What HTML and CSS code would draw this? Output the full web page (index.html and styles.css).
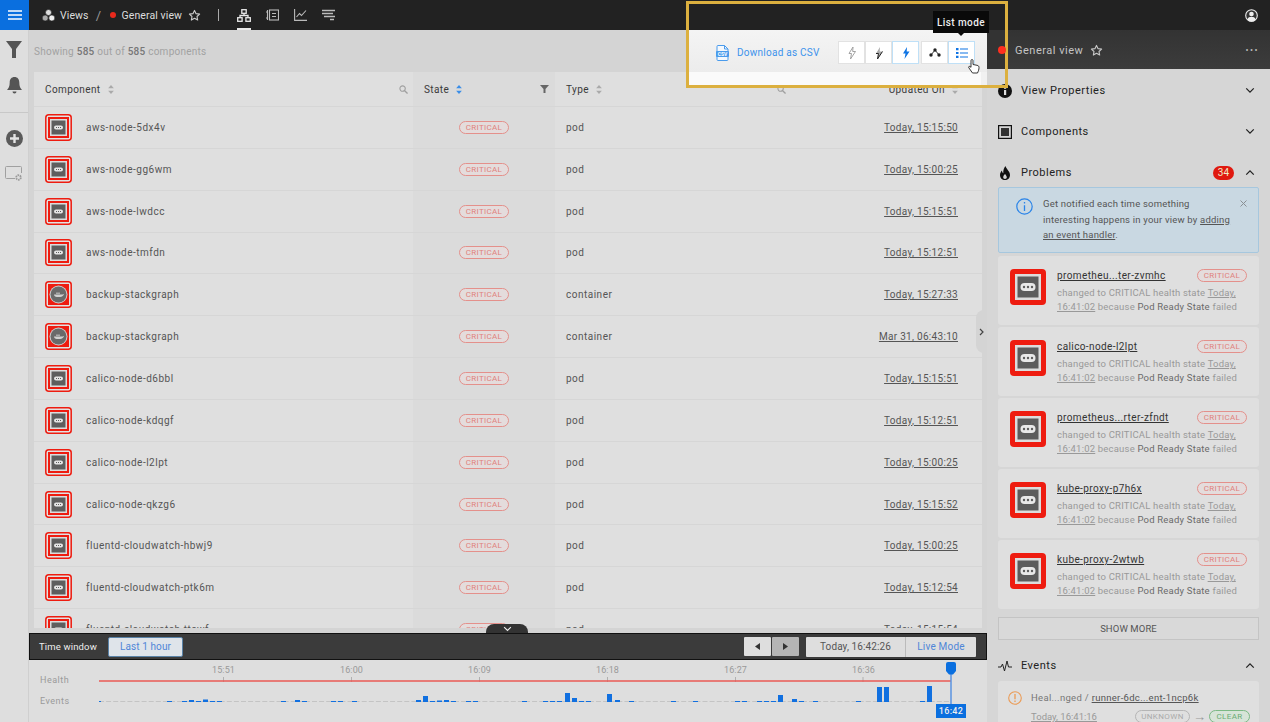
FILE: index.html
```html
<!DOCTYPE html>
<html lang="en">
<head>
<meta charset="utf-8">
<title>General view</title>
<link rel="stylesheet" href="styles.css">
</head>
<body>
<svg class="defs" width="0" height="0" aria-hidden="true">
  <defs>
    <symbol id="pod" viewBox="0 0 27 27">
      <rect x=".8" y=".8" width="25.4" height="25.4" rx="3" fill="#e2e2e2" stroke="#ee1c10" stroke-width="1.5"/>
      <rect x="3" y="3" width="21" height="21" fill="#ee1c10"/>
      <rect x="5" y="5" width="17" height="17" fill="#dcdcdc"/>
      <rect x="6.5" y="6.5" width="14" height="14" fill="#5e5e5e"/>
      <rect x="9" y="11.5" width="9" height="4" rx="2" fill="#e6e6e6"/>
      <path d="M11 13.5h1M13 13.5h1M15 13.5h1" stroke="#5e5e5e"/>
    </symbol>
    <symbol id="docker" viewBox="0 0 27 27">
      <rect x=".8" y=".8" width="25.4" height="25.4" rx="3" fill="#e2e2e2" stroke="#ee1c10" stroke-width="1.5"/>
      <rect x="3" y="3" width="21" height="21" fill="#ee1c10"/>
      <circle cx="13.5" cy="13.5" r="9" fill="#cfcfcf"/>
      <circle cx="13.5" cy="13.5" r="8" fill="#6a6a6a"/>
      <path d="M9 13.5h8.500c.7 0 1.200-.2 1.600-.7-.3 2-2 3.200-4 3.200h-3.200C10.200 16 9 15 9 13.500z" fill="#d0d0d0"/>
      <path d="M11 11.500h4v1.500h-4z" fill="#a8a8a8"/>
    </symbol>
    <symbol id="card-pod" viewBox="0 0 36 36">
      <rect width="36" height="36" rx="4" fill="#ee1c10"/>
      <rect x="5" y="5" width="26" height="26" fill="#dcdcdc"/>
      <rect x="7.500" y="7.500" width="21" height="21" fill="#5c5c5c"/>
      <rect x="10.500" y="14" width="15" height="8" rx="4" fill="#e8e8e8"/>
      <circle cx="14" cy="18" r="1.200" fill="#5c5c5c"/>
      <circle cx="18" cy="18" r="1.200" fill="#5c5c5c"/>
      <circle cx="22" cy="18" r="1.200" fill="#5c5c5c"/>
    </symbol>
    <symbol id="sort" viewBox="0 0 7 11">
      <path d="M3.500 0 7 4H0zM3.500 11 0 7h7z" fill="currentColor"/>
    </symbol>
    <symbol id="search" viewBox="0 0 10 10">
      <circle cx="4" cy="4" r="3" fill="none" stroke="currentColor" stroke-width="1.200"/>
      <path d="M6.300 6.300 9.500 9.500" stroke="currentColor" stroke-width="1.500"/>
    </symbol>
    <symbol id="chev-down" viewBox="0 0 12 8">
      <path d="M1.500 1.500 6 6l4.500-4.500" fill="none" stroke="currentColor" stroke-width="1.500"/>
    </symbol>
    <symbol id="chev-up" viewBox="0 0 12 8">
      <path d="M1.500 6.500 6 2l4.500 4.500" fill="none" stroke="currentColor" stroke-width="1.500"/>
    </symbol>
    <symbol id="star" viewBox="0 0 14 14">
      <path d="m7 1.500 1.700 3.500 3.800.5-2.800 2.600.7 3.800L7 10l-3.400 1.900.7-3.800L1.500 5.500 5.300 5z" fill="none" stroke="currentColor" stroke-width="1.200" stroke-linejoin="round"/>
    </symbol>
  </defs>
</svg>

<div class="app">
  <header class="topbar">
    <button class="menu-btn" aria-label="Menu">
      <svg width="14" height="10" viewBox="0 0 14 10"><path d="M0 1h14M0 5h14M0 9h14" stroke="#fff" stroke-width="1.600"/></svg>
    </button>
    <nav class="crumbs">
      <svg class="views-ico" width="13" height="13" viewBox="0 0 13 13"><circle cx="6.500" cy="3.500" r="3" fill="#ddd" stroke="#222" stroke-width=".6"/><circle cx="3.200" cy="9" r="3" fill="#aaa" stroke="#222" stroke-width=".6"/><circle cx="9.800" cy="9" r="3" fill="#eee" stroke="#222" stroke-width=".6"/></svg>
      <span class="crumb">Views</span>
      <span class="crumb-sep">/</span>
      <span class="dot"></span>
      <span class="crumb">General view</span>
      <svg class="crumb-star" width="13" height="13"><use href="#star"/></svg>
      <span class="vbar"></span>
      <span class="tab tab-on">
        <svg width="14" height="13" viewBox="0 0 14 13"><g fill="none" stroke="#e8e8e8" stroke-width="1.300"><rect x="4.800" y=".7" width="4.400" height="3.600"/><rect x=".7" y="8.700" width="4.400" height="3.600"/><rect x="8.900" y="8.700" width="4.400" height="3.600"/><path d="M7 4.500v2M3 8.500v-2h8v2"/></g></svg>
      </span>
      <span class="tab">
        <svg width="13" height="12" viewBox="0 0 13 12"><g fill="none" stroke="#bbb" stroke-width="1.100"><path d="M0 3h2M0 9h2M1.500 1v10"/><rect x="3.500" y="1" width="9" height="10"/><path d="M6 4.500h4M6 7.500h4"/></g></svg>
      </span>
      <span class="tab">
        <svg width="13" height="12" viewBox="0 0 13 12"><path d="M.6 0v11.400H13M2.500 8l3-3.500 2 2L12 1.500" fill="none" stroke="#bbb" stroke-width="1.100"/></svg>
      </span>
      <span class="tab">
        <svg width="13" height="12" viewBox="0 0 13 12"><path d="M0 1.500h13M0 4.500h11M2 7.500h11M8 10.500h4" fill="none" stroke="#bbb" stroke-width="1.500"/></svg>
      </span>
    </nav>
    <svg class="user" width="13" height="13" viewBox="0 0 13 13"><circle cx="6.500" cy="6.500" r="5.800" fill="#333" stroke="#eee" stroke-width="1.100"/><circle cx="6.500" cy="5" r="2.300" fill="#eee"/><path d="M2.300 10.800c.6-2.400 2.300-3 4.200-3s3.600.6 4.200 3a5.500 5.500 0 0 1-8.400 0z" fill="#eee"/></svg>
  </header>

  <div class="main">
    <aside class="rail">
      <div class="rail-top">
        <svg width="16" height="17" viewBox="0 0 16 17"><path d="M0 0h16L10 8v9H6V8z" fill="#555"/></svg>
        <svg width="15" height="17" viewBox="0 0 15 17"><path d="M7.500 0c3 0 4.800 2.200 4.800 5.500 0 4 1 5.500 2.700 7.500H0c1.700-2 2.700-3.500 2.700-7.500C2.700 2.200 4.500 0 7.500 0zM5.500 14.500h4a2 2 0 0 1-4 0z" fill="#555"/></svg>
      </div>
      <div class="rail-bottom">
        <svg width="17" height="17" viewBox="0 0 17 17"><circle cx="8.500" cy="8.500" r="8.500" fill="#5a5a5a"/><path d="M8.500 4v9M4 8.500h9" stroke="#e4e4e4" stroke-width="2.400"/></svg>
        <svg width="18" height="15" viewBox="0 0 18 15"><path d="M10 12.500H1.500a1 1 0 0 1-1-1v-10a1 1 0 0 1 1-1h14a1 1 0 0 1 1 1V7" fill="none" stroke="#a0a0a0"/><circle cx="13.500" cy="11.500" r="2.300" fill="none" stroke="#9a9a9a" stroke-width="1.800" stroke-dasharray="1.500 .7"/></svg>
      </div>
    </aside>

    <section class="center">
      <div class="tools">
        <p class="showing">Showing <b>585</b> out of <b>585</b> components</p>
      </div>
      <div class="table">
        <div class="row head">
          <div class="col col-name"><span>Component</span><svg class="sort"><use href="#sort"/></svg><svg class="find"><use href="#search"/></svg></div>
          <div class="col col-state"><span>State</span><svg class="sort sort-on"><use href="#sort"/></svg><svg class="funnel" viewBox="0 0 9 8"><path d="M0 0h9L5.500 4v4h-2V4z" fill="currentColor"/></svg></div>
          <div class="col col-type"><span>Type</span><svg class="sort"><use href="#sort"/></svg><svg class="find find-type"><use href="#search"/></svg></div>
          <div class="col col-time"><span>Updated On</span><svg class="sort"><use href="#sort"/></svg></div>
        </div>
        <div class="row"><div class="col col-name"><svg class="ico"><use href="#pod"/></svg><span>aws-node-5dx4v</span></div><div class="col col-state"><span class="badge">CRITICAL</span></div><div class="col col-type">pod</div><div class="col col-time"><u>Today, 15:15:50</u></div></div>
        <div class="row"><div class="col col-name"><svg class="ico"><use href="#pod"/></svg><span>aws-node-gg6wm</span></div><div class="col col-state"><span class="badge">CRITICAL</span></div><div class="col col-type">pod</div><div class="col col-time"><u>Today, 15:00:25</u></div></div>
        <div class="row"><div class="col col-name"><svg class="ico"><use href="#pod"/></svg><span>aws-node-lwdcc</span></div><div class="col col-state"><span class="badge">CRITICAL</span></div><div class="col col-type">pod</div><div class="col col-time"><u>Today, 15:15:51</u></div></div>
        <div class="row"><div class="col col-name"><svg class="ico"><use href="#pod"/></svg><span>aws-node-tmfdn</span></div><div class="col col-state"><span class="badge">CRITICAL</span></div><div class="col col-type">pod</div><div class="col col-time"><u>Today, 15:12:51</u></div></div>
        <div class="row"><div class="col col-name"><svg class="ico"><use href="#docker"/></svg><span>backup-stackgraph</span></div><div class="col col-state"><span class="badge">CRITICAL</span></div><div class="col col-type">container</div><div class="col col-time"><u>Today, 15:27:33</u></div></div>
        <div class="row"><div class="col col-name"><svg class="ico"><use href="#docker"/></svg><span>backup-stackgraph</span></div><div class="col col-state"><span class="badge">CRITICAL</span></div><div class="col col-type">container</div><div class="col col-time"><u>Mar 31, 06:43:10</u></div></div>
        <div class="row"><div class="col col-name"><svg class="ico"><use href="#pod"/></svg><span>calico-node-d6bbl</span></div><div class="col col-state"><span class="badge">CRITICAL</span></div><div class="col col-type">pod</div><div class="col col-time"><u>Today, 15:15:51</u></div></div>
        <div class="row"><div class="col col-name"><svg class="ico"><use href="#pod"/></svg><span>calico-node-kdqgf</span></div><div class="col col-state"><span class="badge">CRITICAL</span></div><div class="col col-type">pod</div><div class="col col-time"><u>Today, 15:12:51</u></div></div>
        <div class="row"><div class="col col-name"><svg class="ico"><use href="#pod"/></svg><span>calico-node-l2lpt</span></div><div class="col col-state"><span class="badge">CRITICAL</span></div><div class="col col-type">pod</div><div class="col col-time"><u>Today, 15:00:25</u></div></div>
        <div class="row"><div class="col col-name"><svg class="ico"><use href="#pod"/></svg><span>calico-node-qkzg6</span></div><div class="col col-state"><span class="badge">CRITICAL</span></div><div class="col col-type">pod</div><div class="col col-time"><u>Today, 15:15:52</u></div></div>
        <div class="row"><div class="col col-name"><svg class="ico"><use href="#pod"/></svg><span>fluentd-cloudwatch-hbwj9</span></div><div class="col col-state"><span class="badge">CRITICAL</span></div><div class="col col-type">pod</div><div class="col col-time"><u>Today, 15:00:25</u></div></div>
        <div class="row"><div class="col col-name"><svg class="ico"><use href="#pod"/></svg><span>fluentd-cloudwatch-ptk6m</span></div><div class="col col-state"><span class="badge">CRITICAL</span></div><div class="col col-type">pod</div><div class="col col-time"><u>Today, 15:12:54</u></div></div>
        <div class="row"><div class="col col-name"><svg class="ico"><use href="#pod"/></svg><span>fluentd-cloudwatch-ttcwf</span></div><div class="col col-state"><span class="badge">CRITICAL</span></div><div class="col col-type">pod</div><div class="col col-time"><u>Today, 15:15:54</u></div></div>
      </div>

      <div class="timebar">
        <span class="tw-label">Time window</span>
        <button class="tw-range">Last 1 hour</button>
        <div class="tw-right">
          <div class="stepper">
            <button class="step"><svg width="5" height="7" viewBox="0 0 5 7"><path d="M5 0v7L0 3.500z" fill="#333"/></svg></button>
            <button class="step step-off"><svg width="5" height="7" viewBox="0 0 5 7"><path d="M0 0v7l5-3.500z" fill="#333"/></svg></button>
          </div>
          <div class="live">
            <span class="live-time">Today, 16:42:26</span>
            <button class="live-btn">Live Mode</button>
          </div>
        </div>
      </div>

      <div class="timeline">
        <div class="tl-labels"><span>Health</span><span>Events</span></div>
        <div class="tl-chart">
          <svg class="tl-svg" width="882" height="62" viewBox="99 660 882 62">
            <path d="M223.500 677v5M351.500 677v5M479.500 677v5M607.500 677v5M735.500 677v5M863 677v5" stroke="#b0b0b0"/>
            <path d="M99 681h852" stroke="#ea5a55" stroke-width="1.400"/>
            <path d="M99 701.500h852" stroke="#c4c4c4" stroke-dasharray="5 2.100"/>
            <path fill="#1170e0" d="M99 701h2v1h-2zM167 701h5v1h-5zM182 701h5v1h-5zM189 700h5v2h-5zM196 701h5v1h-5zM203 699.500h5v2.500h-5zM210 701h5v1h-5zM217 701h5v1h-5zM281 701h5v1h-5zM295 700h5v2h-5zM302 701h5v1h-5zM331 701h5v1h-5zM338 701h5v1h-5zM352 701h5v1h-5zM416 700h5v2h-5zM423 696h5v6h-5zM430 701h5v1h-5zM437 700.500h5v1.500h-5zM444 700h5v2h-5zM451 701h5v1h-5zM466 701h5v1h-5zM473 701h5v1h-5zM522 701h5v1h-5zM543 701h5v1h-5zM550 701h5v1h-5zM557 701h5v1h-5zM565 693h5v9h-5zM572 698h5v4h-5zM579 701h5v1h-5zM586 701h5v1h-5zM607 694h5v8h-5zM615 700h5v2h-5zM629 701h5v1h-5zM671 701h5v1h-5zM693 701h5v1h-5zM735 701h5v1h-5zM742 701h5v1h-5zM757 701h5v1h-5zM764 701h5v1h-5zM771 701h5v1h-5zM778 695h5v7h-5zM792 699h5v3h-5zM799 701h5v1h-5zM813 701h5v1h-5zM856 701h5v1h-5zM877 687h5v15h-5zM884 687h5v15h-5zM920 701h5v1h-5zM927 686h5v16h-5z"/>
            <path d="M951 674v30" stroke="#5a93e0" stroke-width="1.500"/>
            <path d="M946 664a2 2 0 0 1 2-2h6a2 2 0 0 1 2 2v7l-3 3.500h-4l-3-3.500z" fill="#0a6fdf"/>
          </svg>
          <span class="tick t1">15:51</span>
          <span class="tick t2">16:00</span>
          <span class="tick t3">16:09</span>
          <span class="tick t4">16:18</span>
          <span class="tick t5">16:27</span>
          <span class="tick t6">16:36</span>
          <span class="now">16:42</span>
        </div>
      </div>

      <div class="pull"><svg width="9" height="6"><use href="#chev-down"/></svg></div>
      <div class="collapse"><svg width="5" height="8" viewBox="0 0 5 8"><path d="m1 1 3 3-3 3" fill="none" stroke="#444" stroke-width="1.200"/></svg></div>
    </section>

    <aside class="panel">
      <div class="panel-head">
        <span class="panel-dot"></span>
        <span class="panel-title">General view</span>
        <svg class="panel-star" width="13" height="13"><use href="#star"/></svg>
        <span class="more">&#8226;&#8226;&#8226;</span>
      </div>
      <div class="panel-body">
        <div class="sec">
          <svg class="sec-ico" width="14" height="14" viewBox="0 0 14 14"><circle cx="7" cy="7" r="7" fill="#111"/><path d="M6 3h2.200v1.800H6zM6 6h2.200v5H6z" fill="#ddd"/></svg>
          <span>View Properties</span>
          <svg class="chev"><use href="#chev-down"/></svg>
        </div>
        <div class="sec">
          <svg class="sec-ico" width="14" height="14" viewBox="0 0 14 14"><rect x=".6" y=".6" width="12.800" height="12.800" fill="none" stroke="#111" stroke-width="1.200"/><rect x="3" y="3" width="8" height="8" fill="#333"/></svg>
          <span>Components</span>
          <svg class="chev"><use href="#chev-down"/></svg>
        </div>
        <div class="sec">
          <svg class="sec-ico" width="14" height="14" viewBox="0 0 10 14"><path d="M5.500 0c.5 3 4.500 5 4.500 9 0 3-2.200 5-5 5s-5-2-5-5c0-2 1-3.500 2-4.500 0 1.500.5 2.300 1.300 2.800C3 4.500 4 2 5.500 0zM5 8c-1 1.200-1.800 2-1.800 3.300S4 13 5 13s1.800-.5 1.800-1.700S6 9.200 5 8z" fill="#111"/></svg>
          <span>Problems</span>
          <span class="count">34</span>
          <svg class="chev"><use href="#chev-up"/></svg>
        </div>

        <div class="notice">
          <svg class="notice-ico" width="17" height="17" viewBox="0 0 17 17"><circle cx="8.500" cy="8.500" r="7.700" fill="none" stroke="#2a84e8" stroke-width="1.200"/><path d="M8.500 4v1.600M8.500 7.200V13" stroke="#2a84e8" stroke-width="1.300"/></svg>
          <p>Get notified each time something interesting happens in your view by <u>adding an event handler</u>.</p>
          <svg class="notice-x" width="7" height="7" viewBox="0 0 7 7"><path d="m.5.500 6 6m0-6-6 6" stroke="#8a8f93"/></svg>
        </div>

        <article class="card">
          <svg class="card-ico"><use href="#card-pod"/></svg>
          <div class="card-main">
            <div class="card-top"><u class="card-name">prometheu...ter-zvmhc</u><span class="badge">CRITICAL</span></div>
            <p class="card-text">changed to CRITICAL health state <u>Today, 16:41:02</u> because <em>Pod Ready State</em> failed</p>
          </div>
        </article>
        <article class="card">
          <svg class="card-ico"><use href="#card-pod"/></svg>
          <div class="card-main">
            <div class="card-top"><u class="card-name">calico-node-l2lpt</u><span class="badge">CRITICAL</span></div>
            <p class="card-text">changed to CRITICAL health state <u>Today, 16:41:02</u> because <em>Pod Ready State</em> failed</p>
          </div>
        </article>
        <article class="card">
          <svg class="card-ico"><use href="#card-pod"/></svg>
          <div class="card-main">
            <div class="card-top"><u class="card-name">prometheus...rter-zfndt</u><span class="badge">CRITICAL</span></div>
            <p class="card-text">changed to CRITICAL health state <u>Today, 16:41:02</u> because <em>Pod Ready State</em> failed</p>
          </div>
        </article>
        <article class="card">
          <svg class="card-ico"><use href="#card-pod"/></svg>
          <div class="card-main">
            <div class="card-top"><u class="card-name">kube-proxy-p7h6x</u><span class="badge">CRITICAL</span></div>
            <p class="card-text">changed to CRITICAL health state <u>Today, 16:41:02</u> because <em>Pod Ready State</em> failed</p>
          </div>
        </article>
        <article class="card">
          <svg class="card-ico"><use href="#card-pod"/></svg>
          <div class="card-main">
            <div class="card-top"><u class="card-name">kube-proxy-2wtwb</u><span class="badge">CRITICAL</span></div>
            <p class="card-text">changed to CRITICAL health state <u>Today, 16:41:02</u> because <em>Pod Ready State</em> failed</p>
          </div>
        </article>

        <button class="show-more">SHOW MORE</button>

        <div class="sec sec-events">
          <svg class="sec-ico" width="14" height="12" viewBox="0 0 14 12"><path d="M0 7h3l1.500-3 2 7L9 1l1.500 6H14" fill="none" stroke="#222" stroke-width="1"/></svg>
          <span>Events</span>
          <svg class="chev"><use href="#chev-up"/></svg>
        </div>
        <article class="event">
          <svg class="event-ico" width="14" height="14" viewBox="0 0 14 14"><circle cx="7" cy="7" r="6.300" fill="none" stroke="#eb9b55" stroke-width="1.100"/><path d="M7 3v5.200M7 9.500V11" stroke="#eb9b55" stroke-width="1.300"/></svg>
          <div class="event-main">
            <p class="event-title">Heal...nged / <u>runner-6dc...ent-1ncp6k</u></p>
            <div class="event-foot"><u>Today, 16:41:16</u><span class="pill pill-grey">UNKNOWN</span><span class="arrow">&#8594;</span><span class="pill pill-green">CLEAR</span></div>
          </div>
        </article>
      </div>
    </aside>
  </div>

  <div class="spot">
    <div class="spot-dark"></div>
    <div class="spot-body">
      <div class="spot-left">
        <div class="spot-tools">
          <svg class="csv-ico" width="13" height="16" viewBox="0 0 13 16"><path d="M2 .5h6.500l3.500 3.500v10.500a1 1 0 0 1-1 1H2a1 1 0 0 1-1-1v-13a1 1 0 0 1 1-1z" fill="#f4f8fd" stroke="#4a9bec"/><path d="M8.500.5V4H12" fill="none" stroke="#4a9bec"/><rect x="0" y="6" width="13" height="6" rx="1" fill="#4a9bec"/><text class="csv-text" x="6.500" y="10.800" text-anchor="middle">CSV</text></svg>
          <span class="csv-link">Download as CSV</span>
          <div class="btn-group">
            <button class="tool"><svg width="8" height="12" viewBox="0 0 8 12"><path d="M5 0 1 6.500h2.500L2.500 12 7.500 4.500H4.700z" fill="none" stroke="#999" stroke-width=".9"/></svg></button>
            <button class="tool"><svg width="8" height="12" viewBox="0 0 8 12"><path d="M5 0 1 6.500h2.500L2.500 12 7.500 4.500H4.700z" fill="#aaa"/><path d="M1 6.500h2.500L2.500 12 7.500 4.500" fill="none" stroke="#222" stroke-width="1"/></svg></button>
            <button class="tool tool-on"><svg width="8" height="12" viewBox="0 0 8 12"><path d="M5 0 1 6.500h2.500L2.500 12 7.500 4.500H4.700z" fill="#0f74e4"/></svg></button>
          </div>
          <div class="btn-group">
            <button class="tool"><svg width="12" height="9" viewBox="0 0 12 9"><path d="M6 2 2 7m4-5 4 5" stroke="#333"/><circle cx="6" cy="2" r="1.700" fill="#222"/><circle cx="2" cy="7" r="1.700" fill="#222"/><circle cx="10" cy="7" r="1.700" fill="#222"/></svg></button>
            <button class="tool tool-on"><svg width="12" height="10" viewBox="0 0 12 10"><path d="M0 0h2.500v2.200H0zM0 3.900h2.500v2.200H0zM0 7.800h2.500V10H0zM4 .6h8v1H4zM4 4.500h8v1H4zM4 8.400h8v1H4z" fill="#0f74e4"/></svg></button>
          </div>
        </div>
        <div class="spot-table"></div>
      </div>
      <div class="spot-right"><span class="spot-dot"></span></div>
    </div>
  </div>
  <div class="tooltip">List mode</div>
  <svg class="cursor" width="12" height="15" viewBox="0 0 12 15"><path d="M3 1.500c0-1.300 2-1.300 2 0v4l4 .8c1.500.3 2 1 2 2.200 0 2-.6 3.500-1.500 5.500h-5L1 9c-.8-1-.2-2 1-1.500l1 .8z" fill="#fff" stroke="#222" stroke-width=".9"/></svg>
</div>
</body>
</html>
```

FILE: styles.css
```css
* { box-sizing: border-box; }
html, body { margin: 0; padding: 0; }
body { font-family: Roboto, "Liberation Sans", sans-serif; font-size: 10px; letter-spacing: .5px; color: #444; background: #d4d4d4; }
p { margin: 0; }
button { font: inherit; letter-spacing: inherit; padding: 0; border: 0; background: none; color: inherit; }
.defs { position: absolute; }
.app { position: relative; width: 1270px; height: 722px; overflow: hidden; display: flex; flex-direction: column; }

/* top bar */
.topbar { height: 30px; flex: none; background: #222; display: flex; align-items: center; color: #ddd; }
.menu-btn { width: 29px; height: 30px; background: #0a6fdf; display: flex; align-items: center; justify-content: center; }
.crumbs { display: flex; align-items: center; height: 30px; flex: 1; }
.views-ico { margin-left: 13px; }
.crumb { font-size: 10.500px; letter-spacing: .1px; color: #ddd; margin-left: 5px; white-space: nowrap; }
.crumb-sep { margin: 0 8px 0 7px; color: #999; font-size: 13px; }
.dot { width: 6px; height: 6px; border-radius: 50%; background: #e8291c; margin-right: 1px; }
.crumb-star { color: #ccc; margin-left: 6px; }
.vbar { width: 1px; height: 12px; background: #aaa; margin: 0 18px 0 17px; }
.tab { width: 14px; height: 30px; display: flex; align-items: center; justify-content: center; margin-right: 14px; position: relative; }
.tab-on::after { content: ""; position: absolute; left: 0; right: 0; bottom: 0; height: 2px; background: #e8e8e8; }
.user { margin-right: 12px; }

.main { flex: 1; display: flex; min-height: 0; }

/* left rail */
.rail { width: 29px; flex: none; background: #dedede; border-right: 1px solid #cfcfcf; display: flex; flex-direction: column; align-items: center; }
.rail-top { height: 83px; width: 100%; padding-top: 11px; display: flex; flex-direction: column; align-items: center; gap: 19px; border-bottom: 1px solid #c8c8c8; }
.rail-bottom { padding-top: 17px; display: flex; flex-direction: column; align-items: center; gap: 19px; }

/* centre */
.center { width: 958px; flex: none; display: flex; flex-direction: column; position: relative; background: #d4d4d4; }
.tools { height: 42px; flex: none; padding: 0 5px; display: flex; align-items: center; }
.showing { color: #a2a2a2; font-size: 10px; letter-spacing: .25px; }
.showing b { font-weight: 500; color: #777; }
.table { flex: 1; min-height: 0; margin: 0 5px 5px; overflow: hidden; background: #dfdfdf; }
.row { height: 41.85px; display: flex; border-bottom: 1px solid #d6d6d6; color: #555; }
.row.head { height: 35px; }
.col { display: flex; align-items: center; height: 100%; position: relative; }
.col-name { width: 379px; padding-left: 11px; color: #555; }
.head .col { color: #3a3a3a; letter-spacing: .4px; }
.col-state { width: 142px; background: #dbdbdb; justify-content: center; }
.head .col-state { justify-content: flex-start; padding-left: 11px; }
.col-type { width: 243px; padding-left: 11px; }
.col-time { flex: 1; justify-content: flex-end; padding-right: 24px; color: #555; letter-spacing: .3px; }
.ico { width: 27px; height: 27px; margin-right: 14px; flex: none; }
.sort { width: 6px; height: 9px; margin-left: 7px; color: #aaa; }
.sort-on { color: #3b8ee8; }
.find { position: absolute; right: 5px; width: 9px; height: 9px; color: #a0a0a0; }
.find-type { right: 12px; }
.funnel { position: absolute; right: 6px; width: 9px; height: 8px; color: #666; }
.badge { display: inline-flex; align-items: center; justify-content: center; width: 50px; height: 13px; border: 1px solid #e4908b; border-radius: 7px; font-size: 8px; color: #e0827d; letter-spacing: .3px; flex: none; background: #e4dcdc; }

/* time window bar */
.timebar { height: 27px; flex: none; background: #3b3b3b; border: 1px solid #111; display: flex; align-items: center; padding-left: 9px; }
.tw-label { color: #eee; font-size: 9.500px; letter-spacing: .15px; white-space: nowrap; }
.tw-range { margin-left: 11px; width: 75px; height: 20px; background: #dfe4ea; color: #4f86d8; border-radius: 2px; font-size: 10px; letter-spacing: .1px; border: 1px solid #5a83a8; }
.tw-right { margin-left: auto; display: flex; align-items: center; gap: 6px; padding-right: 10px; }
.stepper { display: flex; gap: 1px; margin-right: 1px; }
.step { width: 27px; height: 19px; background: #dedede; border-radius: 1px; display: flex; align-items: center; justify-content: center; }
.step-off { background: #b5b5b5; }
.live { display: flex; height: 20px; background: #dedede; border-radius: 1px; }
.live-time { width: 100px; display: flex; align-items: center; justify-content: center; color: #555; font-size: 10px; letter-spacing: .1px; white-space: nowrap; border-right: 1px solid #bbb; }
.live-btn { width: 70px; color: #4f86d8; font-size: 10px; letter-spacing: .2px; }

/* timeline */
.timeline { height: 62px; flex: none; background: #dedede; display: flex; position: relative; }
.tl-labels { width: 70px; padding: 15px 0 0 11px; display: flex; flex-direction: column; gap: 10px; color: #9a9a9a; font-size: 9px; line-height: 11px; }
.tl-chart { position: relative; flex: 1; }
.tl-svg { display: block; }
.tick { position: absolute; top: 5px; width: 30px; margin-left: -14.500px; text-align: center; color: #999; font-size: 9px; line-height: 11px; letter-spacing: .1px; }
.t1 { left: 124px; }
.t2 { left: 252px; }
.t3 { left: 380px; }
.t4 { left: 508px; }
.t5 { left: 636px; }
.t6 { left: 764px; }
.now { position: absolute; left: 837px; top: 44px; width: 30px; height: 14px; background: #0a6fdf; color: #eee; font-size: 9px; display: flex; align-items: center; justify-content: center; font-weight: 500; letter-spacing: .3px; }
.pull { position: absolute; left: 457px; top: 594px; width: 42px; height: 9px; background: #333; border-radius: 8px 8px 0 0; display: flex; justify-content: center; align-items: center; color: #eee; }
.collapse { position: absolute; right: 0; top: 280px; width: 11px; height: 43px; background: #d4d4d4; border-radius: 8px 0 0 8px; display: flex; align-items: center; justify-content: center; }

/* right panel */
.panel { flex: 1; min-width: 0; background: #d6d6d6; display: flex; flex-direction: column; }
.panel-head { height: 39px; flex: none; background: linear-gradient(#333, #3c3c3c); display: flex; align-items: center; padding: 1px 11px 0; color: #c4c4c4; }
.panel-dot { width: 8px; height: 8px; border-radius: 50%; background: #e8291c; margin-right: 9px; }
.panel-title { font-size: 11px; white-space: nowrap; }
.panel-star { margin-left: 7px; color: #c8c8c8; }
.more { margin-left: auto; color: #bbb; font-size: 9px; letter-spacing: 1.500px; }
.panel-body { padding: 1px 11px 0; flex: 1; overflow: hidden; }
.sec { height: 41px; display: flex; align-items: center; color: #222; font-size: 11px; }
.sec-ico { margin-right: 9px; flex: none; }
.chev { width: 10px; height: 7px; margin: 0 4px 0 auto; color: #222; flex: none; }
.count { margin-left: auto; width: 21px; height: 14px; background: #e0190f; color: #eec; border-radius: 7px; font-size: 10px; display: flex; align-items: center; justify-content: center; letter-spacing: .2px; }
.count + .chev { margin-left: 11px; }
.notice { height: 66px; margin-top: -6px; background: #c9d8e2; border: 1px solid #a6c7de; border-radius: 2px; padding: 8px 9px 0 17px; display: flex; align-items: flex-start; color: #555; font-size: 9.500px; letter-spacing: .2px; line-height: 15.500px; }
.notice-ico { margin: 2px 10px 0 0; flex: none; }
.notice p { flex: 1; }
.notice-x { flex: none; margin: 4px 2px 0 8px; }
.card { height: 69px; margin-top: 2px; background: #dfdfdf; border-radius: 3px; display: flex; padding: 13px 12px 0 12px; }
.notice + .card { margin-top: 3px; }
.card-ico { width: 36px; height: 36px; flex: none; margin-right: 11px; }
.card-main { flex: 1; min-width: 0; }
.card-top { display: flex; justify-content: space-between; align-items: center; height: 13px; margin-bottom: 4px; }
.card-name { font-size: 10px; letter-spacing: .4px; color: #333; }
.card-text { color: #999; font-size: 9.500px; letter-spacing: .2px; line-height: 13.500px; }
.card-text u { color: #999; }
.card-text em { font-style: normal; color: #6a6a6a; }
.show-more { display: block; width: 100%; height: 23px; margin-top: 8px; border: 1px solid #c4c4c4; background: #d9d9d9; color: #555; font-size: 9.500px; letter-spacing: .1px; }
.sec-events { height: 41px; margin-top: 5px; }
.event { height: 60px; margin-top: -5px; background: #dfdfdf; border-radius: 3px; display: flex; padding: 10px 9px 0 10px; }
.event-ico { flex: none; margin: 0 9px 0 0; }
.event-main { flex: 1; min-width: 0; }
.event-title { color: #777; font-size: 9.500px; letter-spacing: .3px; height: 18px; line-height: 13px; }
.event-title u { color: #555; }
.event-foot { display: flex; align-items: center; color: #999; font-size: 9.500px; letter-spacing: 0; }
.pill { height: 13px; border-radius: 7px; font-size: 8px; display: flex; align-items: center; justify-content: center; border: 1px solid; letter-spacing: .4px; }
.pill-grey { width: 55px; margin-left: auto; color: #aaa; border-color: #b5b5b5; }
.pill-green { width: 41px; color: #6cac74; border-color: #7bb984; background: #d7e4d8; }
.arrow { color: #999; margin: 0 3px; font-size: 13px; }

/* spotlight */
.spot { position: absolute; left: 686px; top: 1px; width: 322px; height: 87px; border: 3px solid #dcb03f; display: flex; flex-direction: column; }
.spot-dark { height: 26px; flex: none; background: #222; }
.spot-body { flex: 1; display: flex; }
.spot-left { width: 298px; flex: none; display: flex; flex-direction: column; background: #f1f1f1; }
.spot-tools { height: 42px; flex: none; display: flex; align-items: center; padding: 3px 0 0 27px; background: linear-gradient(#f4f4f4, #ececec); }
.csv-ico { margin-right: 8px; }
.csv-text { font-family: Roboto, sans-serif; font-size: 5px; font-weight: 700; fill: #fff; letter-spacing: 0; }
.csv-link { color: #3d93ec; font-size: 10px; letter-spacing: .25px; width: 101px; white-space: nowrap; }
.btn-group { display: flex; margin-right: 2px; }
.tool { width: 27px; height: 23px; background: #fff; border: 1px solid #e2e2e2; display: flex; align-items: center; justify-content: center; }
.tool-on { border-color: #bfe0f7; }
.spot-table { flex: 1; background: #fafafa; margin-right: 6px; }
.spot-right { flex: 1; height: 39px; background: #333; position: relative; }
.spot-dot { position: absolute; left: 11px; top: 16px; width: 8px; height: 8px; border-radius: 50%; background: #ff2f1f; }
.tooltip { position: absolute; left: 933px; top: 11px; width: 56px; height: 22px; background: #0a0a0a; color: #eee; display: flex; align-items: center; justify-content: center; font-size: 10px; font-weight: 500; letter-spacing: .4px; white-space: nowrap; }
.tooltip::after { content: ""; position: absolute; left: 25px; top: 22px; border: 3px solid transparent; border-top-color: #0a0a0a; }
.cursor { position: absolute; left: 968px; top: 59px; }
```
